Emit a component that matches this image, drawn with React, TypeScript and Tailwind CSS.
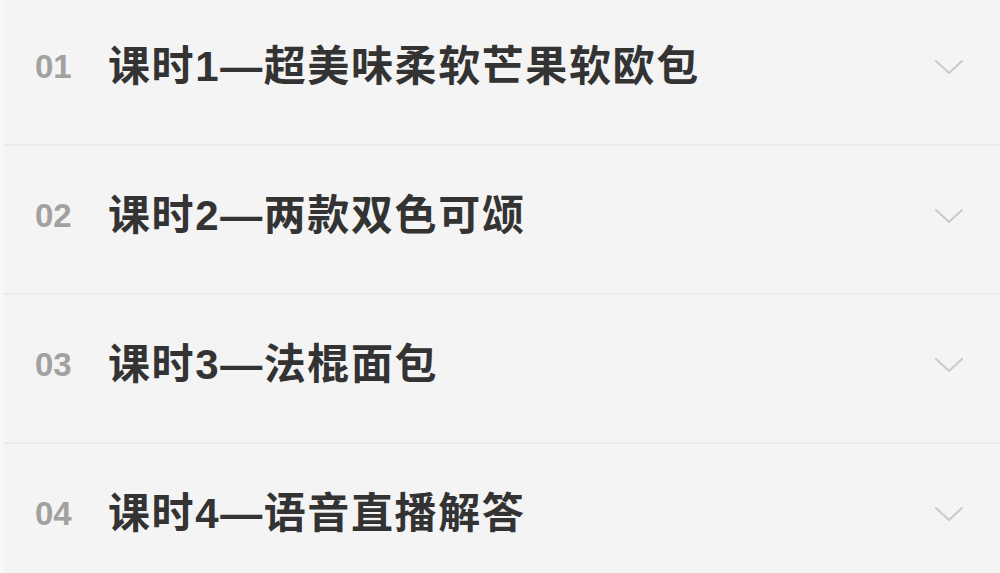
const lessons = [
  { no: '01', title: '课时1—超美味柔软芒果软欧包' },
  { no: '02', title: '课时2—两款双色可颂' },
  { no: '03', title: '课时3—法棍面包' },
  { no: '04', title: '课时4—语音直播解答' },
]

function Chevron() {
  return (
    <svg width="30" height="16" viewBox="0 0 30 16" fill="none" className="shrink-0">
      <path d="M2 2 L15 14 L28 2" stroke="#c9c9c9" strokeWidth="2" strokeLinecap="round" strokeLinejoin="round" />
    </svg>
  )
}

export default function App() {
  return (
    <div
      className="w-[1000px] h-[573px] overflow-hidden bg-[#f4f4f4] border-l-[4px] border-[#f8f8f8]"
      style={{ fontFamily: '"Liberation Sans", "Noto Sans CJK SC", sans-serif' }}
    >
      <div className="-mt-[3px]">
        {lessons.map((l) => (
          <div
            key={l.no}
            className="h-[149px] flex items-center pb-[8px] border-b-2 border-[#ebebeb] pl-[31px] pr-[36px]"
          >
            <span className="w-[73px] text-[33px] font-bold text-[#a1a1a1] leading-none">{l.no}</span>
            <span className="flex-1 text-[42px] font-bold text-[#333333] leading-none tracking-[1.6px]">{l.title}</span>
            <Chevron />
          </div>
        ))}
      </div>
    </div>
  )
}
